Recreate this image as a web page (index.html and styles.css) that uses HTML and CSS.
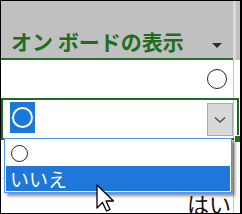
FILE: index.html
```html
<!DOCTYPE html>
<html lang="ja">
<head>
    <meta charset="UTF-8">
    <title>オン ボードの表示</title>
    <link rel="stylesheet" href="styles.css">
</head>
<body>
    <div class="sheet">
        <div class="main">
            <div class="head">
                <span class="title">オン ボードの表示</span>
                <span class="filter"></span>
            </div>
            <div class="row"><span class="ring"></span></div>
            <div class="row active">
                <span class="sel"><span class="ring white"></span></span>
                <span class="dd-btn">
                    <svg width="12" height="8" viewBox="0 0 12 8"><path d="M1 1.5 L6 6 L11 1.5" fill="none" stroke="#555" stroke-width="1.6"/></svg>
                </span>
                <span class="handle"></span>
            </div>
            <div class="row"></div>
            <div class="row last"><span class="val">はい</span></div>
        </div>
        <div class="side">
            <div class="side-head"></div>
        </div>

        <!-- open dropdown -->
        <ul class="list">
            <li class="item"><span class="ring small"></span></li>
            <li class="item picked">いいえ</li>
        </ul>

        <svg class="cursor" width="20" height="29" viewBox="0 0 20 29">
            <path d="M1 1 L1 24 L6.5 18.5 L10.5 27 L14 25.5 L10 17 L17.5 17 Z" fill="#fff" stroke="#000" stroke-width="1.3" stroke-linejoin="round"/>
        </svg>
    </div>
</body>
</html>
```

FILE: styles.css
```css
body {
    margin: 0;
    font-family: "Noto Sans CJK JP", "Noto Sans", sans-serif;
}
.sheet {
    position: relative;
    width: 242px;
    height: 214px;
    box-sizing: border-box;
    border: 1px solid #000;
    border-left-width: 1px;
    border-right-width: 2px;
    background: #fff;
    display: flex;
    overflow: hidden;
}
.main {
    width: 232px;
    flex-shrink: 0;
    position: relative;
    z-index: 1;
}
.side {
    flex: 1;
    border-left: 1px solid #c8c8c8;
}
.side-head {
    height: 59px;
    margin-left: -1px;
    background: #c0c0c0;
    border-left: 3px solid #d9d9d9;
}
.head {
    height: 57px;
    background: #c0c0c0;
    border-bottom: 2px solid #2d6a2d;
    display: flex;
    align-items: flex-end;
    padding: 0 0 0 10px;
}
.title {
    font-size: 21px;
    font-weight: bold;
    color: #1f6d1f;
    line-height: 26px;
    margin-bottom: 4px;
}
.filter {
    margin-left: auto;
    margin-right: 11px;
    margin-bottom: 10px;
    width: 0;
    height: 0;
    border-left: 5px solid transparent;
    border-right: 5px solid transparent;
    border-top: 5px solid #233623;
}
.row {
    height: 38px;
    border-bottom: 1px solid #d4d4d4;
    display: flex;
    align-items: center;
    justify-content: flex-end;
    padding-right: 4px;
}
.ring {
    display: inline-block;
    width: 18px;
    height: 18px;
    border: 1.2px solid #222;
    border-radius: 50%;
    margin-right: 2px;
}
.ring.white {
    width: 17px;
    height: 17px;
    border: 2px solid #fff;
    margin: 0;
}
.ring.small {
    width: 15px;
    height: 15px;
    margin: 0 0 0 5px;
}
.row.active {
    position: relative;
    width: 234px;
    height: 38px;
    box-sizing: content-box;
    margin-top: -1px;
    border: 2px solid #1f6b24;
    padding: 0;
    align-items: flex-start;
    justify-content: flex-start;
}
.sel {
    margin: 2px 0 0 7px;
    width: 25px;
    height: 31px;
    background: #1b78d8;
    display: flex;
    align-items: center;
    justify-content: center;
}
.dd-btn {
    margin: 3px 4px 0 auto;
    width: 24px;
    height: 31px;
    background: #d8d8d8;
    border: 1px solid #a9a9a9;
    display: flex;
    align-items: center;
    justify-content: center;
}
.handle {
    position: absolute;
    right: -5px;
    bottom: -5px;
    width: 6px;
    height: 6px;
    background: #1f6b24;
    border: 1px solid #fff;
}
.row.last {
    align-items: flex-start;
    padding-right: 2px;
}
.val {
    font-size: 22px;
    line-height: 26px;
    margin-top: 11px;
    color: #111;
}
.list {
    position: absolute;
    left: 3px;
    top: 137px;
    z-index: 2;
    margin: 0;
    padding: 1px;
    list-style: none;
    width: 224px;
    border: 1px solid #4e97e4;
    background: #fff;
    box-shadow: 3px 3px 3px rgba(0, 0, 0, 0.45);
}
.item {
    height: 26px;
    display: flex;
    align-items: center;
}
.item.picked {
    height: 25px;
    background: #1e77d9;
    color: #fff;
    font-size: 19px;
    padding-left: 4px;
    line-height: 25px;
}
.cursor {
    position: absolute;
    left: 95px;
    top: 183px;
    z-index: 3;
}
```
